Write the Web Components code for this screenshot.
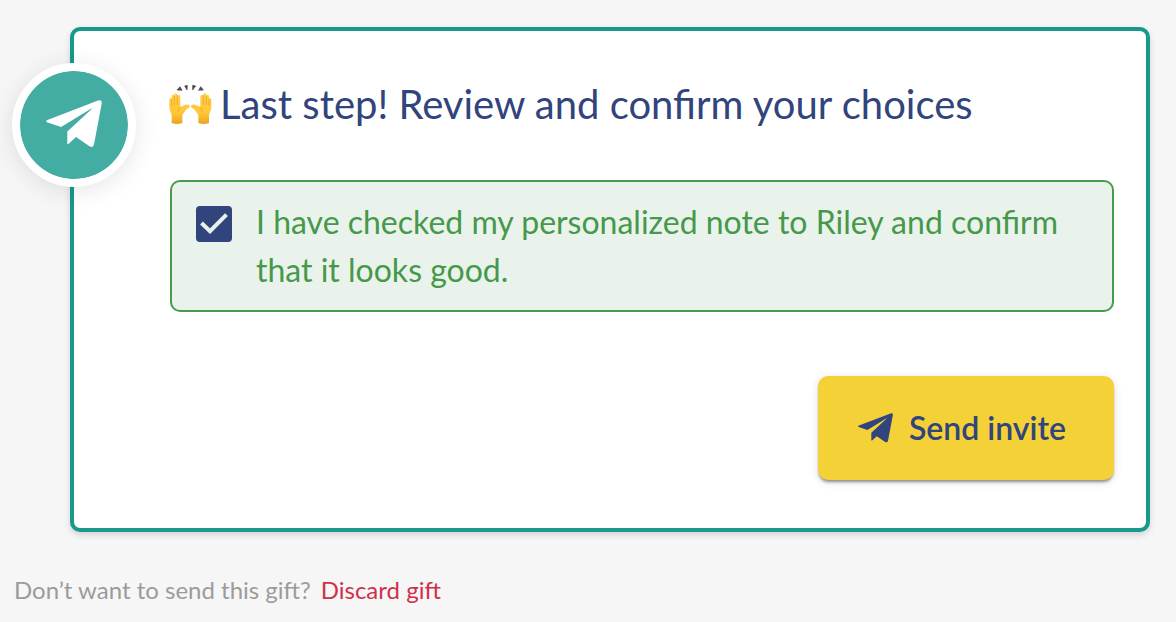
<!DOCTYPE html>
<html lang="en">
<head>
<meta charset="utf-8">
<meta name="viewport" content="width=device-width, initial-scale=1">
<title>Review and confirm</title>
<style>
  body { margin: 0; background: #f6f6f6; font-family: Lato, "Open Sans", sans-serif; color: #31447c; }
</style>
</head>
<body>
<gift-page>
  <step-card>
    <raised-hands slot="emoji"></raised-hands>
    <span slot="title">Last step! Review and confirm your choices</span>
    <confirm-check>I have checked my personalized note to Riley and confirm that it looks good.</confirm-check>
    <send-button slot="action">Send invite</send-button>
  </step-card>
  <discard-note slot="footer">Don’t want to send this gift?</discard-note>
</gift-page>

<script>
  const define = (name, html) => customElements.define(name, class extends HTMLElement {
    constructor() {
      super();
      this.attachShadow({ mode: 'open' }).innerHTML = html;
    }
  });

  define('paper-plane', `
    <style>
      :host { display: block; line-height: 0; }
      svg { width: 100%; fill: currentColor; }
    </style>
    <svg viewBox="0 0 56 48" aria-hidden="true"><path d="M1.5 20 52 .6Q56-.6 55.800 3L48 44.500Q47 48.200 43.500 46.300L30 37 23 43.500Q21.300 45 21.300 43V31.500L45.500 9.200Q46.600 8 45 8.800L15 27 1 22.300Q-.7 21 1.500 20Z"/></svg>`);

  define('raised-hands', `
    <style>
      :host { display: block; width: 44px; line-height: 0; }
      svg { width: 100%; }
    </style>
    <svg viewBox="24 30 132 120" role="img" aria-label="Raised hands">
      <defs>
        <linearGradient id="skin" x1="0" y1="0" x2="0" y2="1">
          <stop offset="0" stop-color="#ffd04a"/><stop offset=".65" stop-color="#ffc636"/><stop offset="1" stop-color="#eda21f"/>
        </linearGradient>
        <g id="hand">
          <path fill="url(#skin)" d="M35 147V122C31 113 28 105 28 95V77C28 71 34 71 35 76V67C36 61 42 61 43 66V62C44 56 51 56 52 62V66C54 61 60 62 61 68V99C66 97 71 93 77 92 84 90 91 94 89 99 88 102 84 102 80 105 74 111 73 117 67 122V147Q51 153 35 147Z"/>
          <path fill="none" stroke="#e69b23" stroke-width="2" stroke-linecap="round" d="M35 77V94M43 67V92M52 64V92M61 99Q54 104 56 112"/>
        </g>
      </defs>
      <use href="#hand"/>
      <use href="#hand" transform="translate(182 0) scale(-1 1)"/>
      <g fill="#4a4a4a" stroke="#4a4a4a" stroke-width="2" stroke-linejoin="round">
        <path d="M60 38 66 49 51 48Z"/><path d="M74 36 82 34 81 48Z"/>
        <path d="M98 34 107 36 98 48Z"/><path d="M122 38 130 48 116 49Z"/>
      </g>
    </svg>`);

  define('confirm-check', `
    <style>
      :host { display: block; }
      label {
        display: flex; align-items: flex-start; gap: 24px; padding: 16px 24px;
        border: 2px solid #4a9a4c; border-radius: 10px; background: #e9f3ec;
        color: #46984a; font-size: 32px; line-height: 48px;
      }
      .box { display: grid; flex: none; margin-top: 8px; }
      input, svg { grid-area: 1 / 1; width: 36px; height: 36px; }
      input { appearance: none; margin: 0; border: 2px solid #31447c; border-radius: 4px; background: #fff; }
      input:checked { background: #31447c; }
      svg { pointer-events: none; fill: none; stroke: #e9f3ec; stroke-width: 4; visibility: hidden; }
      input:checked + svg { visibility: visible; }
    </style>
    <label>
      <span class="box">
        <input type="checkbox" checked>
        <svg viewBox="0 0 36 36" aria-hidden="true"><path d="M5.500 17 14 25.200 30.500 8.700"/></svg>
      </span>
      <span><slot></slot></span>
    </label>`);

  define('send-button', `
    <style>
      :host { display: block; }
      button {
        display: flex; align-items: center; gap: 16px; padding: 28px 48px 28px 40px;
        border: 0; border-radius: 10px; background: #f3d137; color: #31447c;
        font: 600 32px/48px Lato, "Open Sans", sans-serif; cursor: pointer;
        box-shadow: 0 3px 3px -1px rgba(0, 0, 0, .4), 0 2px 10px rgba(0, 0, 0, .12);
      }
      paper-plane { width: 35px; }
    </style>
    <button type="button"><paper-plane></paper-plane><slot></slot></button>`);

  define('step-card', `
    <style>
      :host { display: block; }
      section {
        position: relative; padding: 49px 32px 48px 96px;
        border: 4px solid #18998b; border-radius: 10px; background: #fff;
        box-shadow: 0 3px 6px rgba(0, 0, 0, .14);
      }
      .badge {
        position: absolute; left: -62px; top: 32px; box-sizing: border-box;
        width: 124px; height: 124px; display: grid; place-items: center; padding-bottom: 2px;
        border: 8px solid #fff; border-radius: 50%; background: #44ada3; color: #fff;
        background-clip: padding-box; box-shadow: 0 4px 24px rgba(0, 0, 0, .1);
      }
      .badge paper-plane { width: 56px; }
      h1 {
        display: flex; align-items: center; gap: 8px; margin: 0 0 52px -2px;
        font-size: 40px; line-height: 48px; font-weight: 400;
      }
      .action { display: flex; justify-content: flex-end; margin-top: 64px; }
    </style>
    <section>
      <div class="badge"><paper-plane></paper-plane></div>
      <h1><slot name="emoji"></slot><slot name="title"></slot></h1>
      <slot></slot>
      <div class="action"><slot name="action"></slot></div>
    </section>`);

  define('discard-note', `
    <style>
      :host { display: block; }
      p { display: flex; flex-wrap: wrap; gap: 10px; margin: 0; color: #9b9b9b; font-size: 24px; line-height: 36px; }
      a { color: #d0304a; text-decoration: none; }
    </style>
    <p><slot></slot><a href="#discard">Discard gift</a></p>`);

  define('gift-page', `
    <style>
      :host { display: block; }
      main { padding: 27px 26px 0 70px; }
      footer { padding: 40px 14px 12px; }
    </style>
    <main><slot></slot></main>
    <footer><slot name="footer"></slot></footer>`);
</script>
</body>
</html>
